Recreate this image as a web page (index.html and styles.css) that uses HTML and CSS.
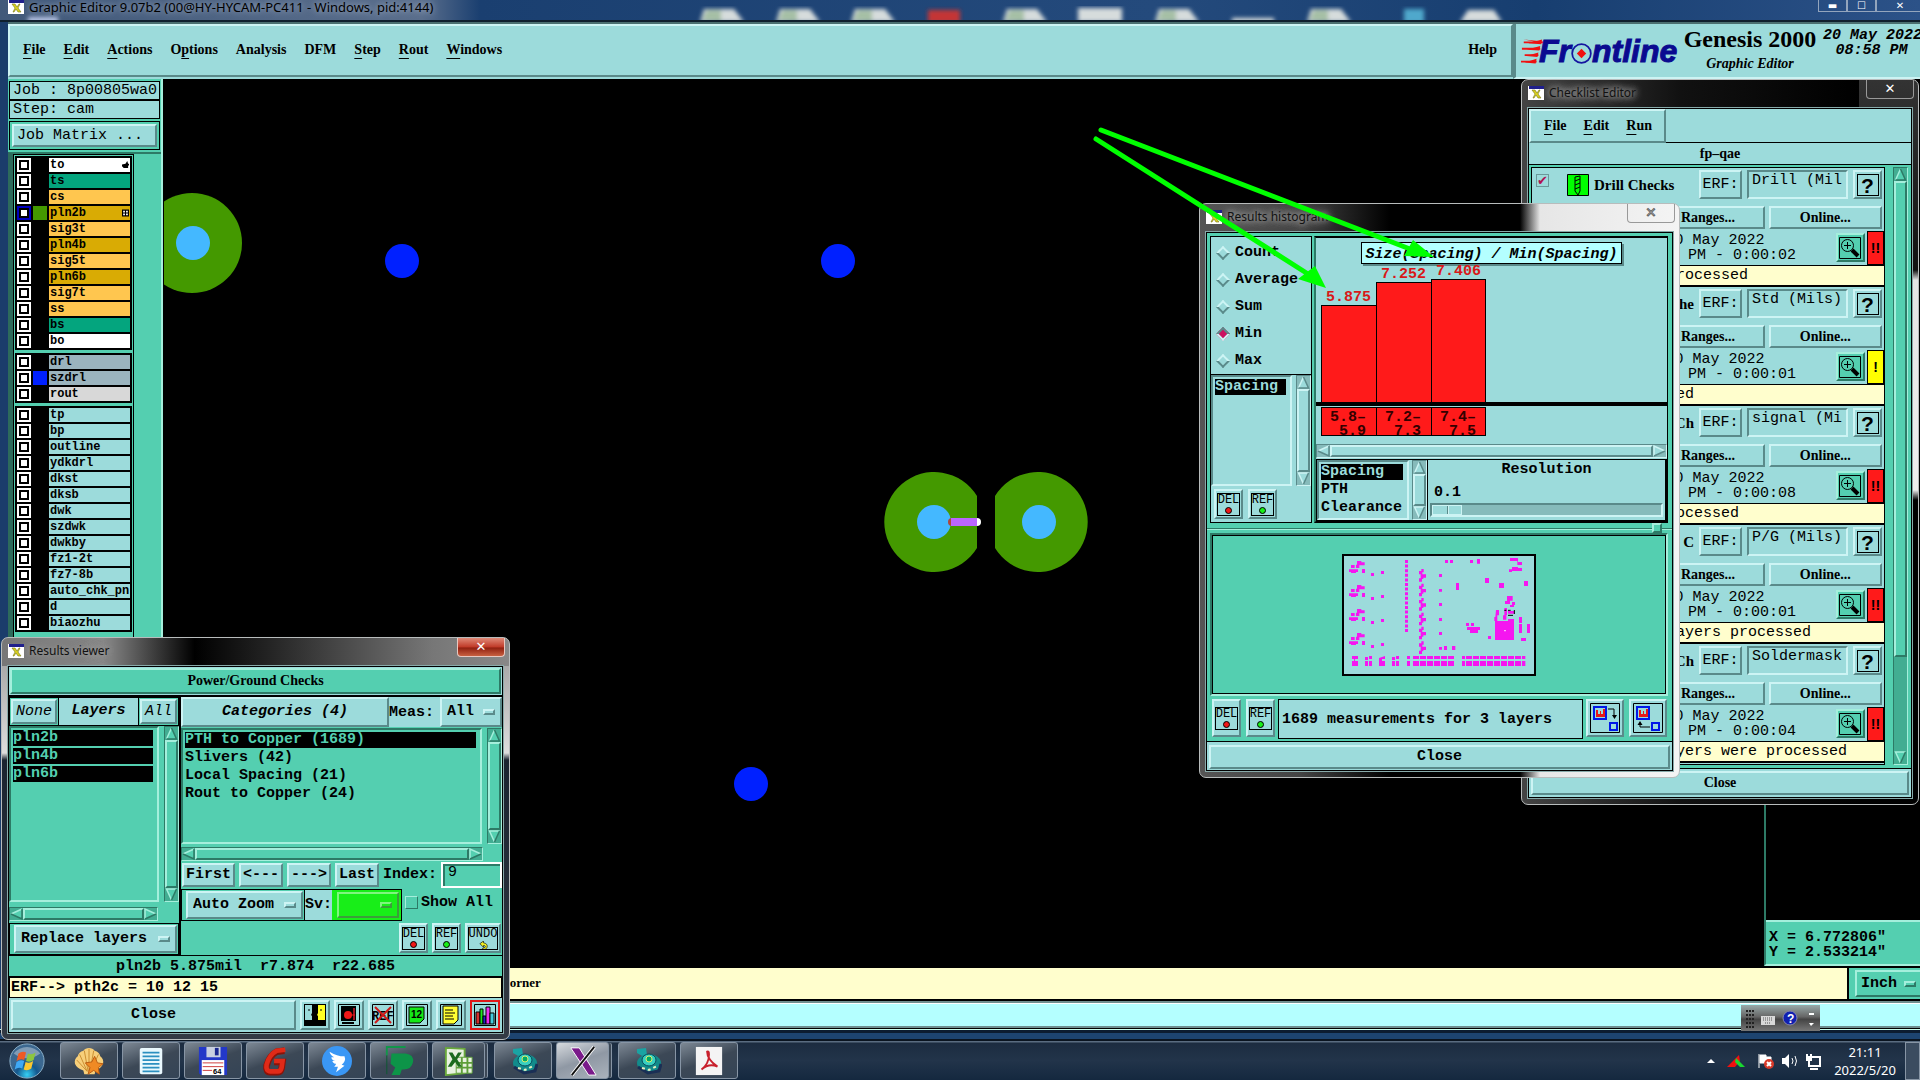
FILE: index.html
```html
<!DOCTYPE html>
<html lang="en">
<head>
<meta charset="utf-8">
<title>Graphic Editor 9.07b2</title>
<link rel="stylesheet" href="styles.css">
</head>
<body>
<svg class="defs" aria-hidden="true">
  <symbol id="a-up" viewBox="0 0 12 13"><path d="M6 1L11 12H1Z" class="a-f"/><path d="M6 1L1 12" class="a-h"/><path d="M6 1L11 12H1" class="a-l"/></symbol>
  <symbol id="a-dn" viewBox="0 0 12 13"><path d="M1 1H11L6 12Z" class="a-f"/><path d="M6 12L1 1H11" class="a-h"/><path d="M11 1L6 12" class="a-l"/></symbol>
  <symbol id="a-lf" viewBox="0 0 13 12"><path d="M1 6L12 1V11Z" class="a-f"/><path d="M1 6L12 1" class="a-h"/><path d="M12 1V11L1 6" class="a-l"/></symbol>
  <symbol id="a-rt" viewBox="0 0 13 12"><path d="M12 6L1 1V11Z" class="a-f"/><path d="M1 11V1L12 6" class="a-h"/><path d="M12 6L1 11" class="a-l"/></symbol>
  <symbol id="xico" viewBox="0 0 16 14"><path d="M0 0H16V14H0Z" fill="#fff"/><path d="M1 0H16V3H1Z" fill="#20208c"/><path d="M4 4l3 0 2 3 2-3h1l-2 4 3 4h-3l-2-3-2 3H5l2-4z" fill="#d8d020" stroke="#77751a" stroke-width=".6"/></symbol>
  <symbol id="mag" viewBox="0 0 22 22"><path d="M.5 .5H21.500V21.500H.5Z" fill="none" stroke="#000"/><circle cx="8.500" cy="8.500" r="6" fill="none" stroke="#000"/><path d="M5 8.500H12M8.500 5V12" stroke="#000"/><path d="M13 13L19 19" stroke="#000" stroke-width="4"/></symbol>
  <symbol id="bino" viewBox="0 0 30 30"><path d="M5 3l9-1 1 7 4 2 2 4-4 1-5-5-7-4z" fill="#1aa3a3"/><ellipse cx="17" cy="17" rx="12" ry="9" fill="#128b8b"/><ellipse cx="17" cy="14" rx="7" ry="6" fill="#37cfc0" stroke="#0b4a5c"/><circle cx="17" cy="13" r="3" fill="#0a6" stroke="#dfe96a"/><path d="M6 21l10 6 11-2 2-7" stroke="#1a2f55" stroke-width="3" fill="none"/><path d="M10 22l7 2 8-4" stroke="#e8f0c0" stroke-width="2" stroke-dasharray="3 3" fill="none"/></symbol>
</svg>

<main class="app">
  <header class="titlebar">
    <svg class="blur" aria-hidden="true"><g filter="url(#soft)"><filter id="soft"><feGaussianBlur stdDeviation="2"/></filter>
      <path d="M700 22l4-13h30l10 13z M776 22l4-13h30l10 13z M851 22l4-13h30l10 13z M1003 22l4-13h30l10 13z M1155 22l4-13h30l10 13z M1307 22l4-13h30l10 13z M1078 8h44v14h-44z M1460 22l8-12h26l8 12z M1232 18h42v5h-42z" fill="#d6dcdc"/>
      <path d="M702 20l5-10h14v12z M778 20l5-10h14v12z M853 20l5-10h14v12z M1005 20l5-10h14v12z M1157 20l5-10h14v12z M1309 20l5-10h14v12z" fill="#a5bfa5"/>
      <path d="M928 10h32v13h-32z" fill="#c43535"/><path d="M1404 9h20v14h-20z" fill="#50a8cc"/><path d="M28 17h30v6h-30z" fill="#b9c6e6"/>
    </g></svg>
    <svg class="x16"><use href="#xico"/></svg><span>Graphic Editor 9.07b2 (00@HY-HYCAM-PC411 - Windows, pid:4144)</span>
    <div class="winbtns"><button aria-label="Minimize">▬</button><button aria-label="Maximize">☐</button><button aria-label="Close">✕</button></div>
  </header>

  <div class="topbar">
    <nav class="menu up serif">
      <button><u>F</u>ile</button><button><u>E</u>dit</button><button><u>A</u>ctions</button><button>O<u>p</u>tions</button><button>Analysis</button><button>DFM</button><button><u>S</u>tep</button><button><u>R</u>out</button><button><u>W</u>indows</button>
      <button class="help">Help</button>
    </nav>
    <div class="brand">
      <div class="logo"><svg viewBox="0 0 24 27" aria-hidden="true"><path d="M3 3h21v2H3zM3 1l21 2v2zM1 10h20v2H1zM4 17h15v2H4zM0 24h17v2H0z" fill="#f01010"/><path d="M8 5l15-4-1 5zM6 12l15-4-1 5zM6 19l13-4-1 5zM4 26l13-4-1 5z" fill="#f01010"/></svg><span>Fr</span><svg class="o" viewBox="0 0 18 18" aria-hidden="true"><circle cx="9" cy="9" r="8" fill="none" stroke="#1515a0" stroke-width="1.500"/><path d="M9 5l4 4-4 4-4-4z" fill="#f01010"/></svg><span>ntline</span></div>
      <div class="prod"><b>Genesis 2000</b><i>Graphic Editor</i></div>
      <div class="clock">20 May 2022<br>08:58 PM</div>
    </div>
  </div>

  <section class="work">
    <aside class="side">
      <div class="job">Job : 8p00805wa0</div>
      <div class="job">Step: cam</div>
      <div class="jm"><button class="up">Job Matrix ...</button></div>
      <div class="lwrap"><div class="layers">
        <div class="grp">
          <label class="w"><input type="checkbox"><i></i><span>to<svg viewBox="0 0 8 9"><path d="M0 4l4-1 2-3 1 3h1v2H7v3H2L0 6z"/></svg></span></label>
          <label class="g"><input type="checkbox"><i></i><span>ts</span></label>
          <label class="o"><input type="checkbox"><i></i><span>cs</span></label>
          <label class="d sel"><input type="checkbox"><i class="c-green"></i><span>pln2b<svg viewBox="0 0 6 6"><path d="M.5 .5h5v5h-5zM3 0v6M0 3h6" fill="#fff" stroke="#000"/></svg></span></label>
          <label class="o"><input type="checkbox"><i></i><span>sig3t</span></label>
          <label class="d"><input type="checkbox"><i></i><span>pln4b</span></label>
          <label class="o"><input type="checkbox"><i></i><span>sig5t</span></label>
          <label class="d"><input type="checkbox"><i></i><span>pln6b</span></label>
          <label class="o"><input type="checkbox"><i></i><span>sig7t</span></label>
          <label class="o"><input type="checkbox"><i></i><span>ss</span></label>
          <label class="g"><input type="checkbox"><i></i><span>bs</span></label>
          <label class="w"><input type="checkbox"><i></i><span>bo</span></label>
        </div>
        <div class="grp">
          <label class="s"><input type="checkbox"><i></i><span>drl</span></label>
          <label class="s"><input type="checkbox"><i class="c-blue"></i><span>szdrl</span></label>
          <label class="l"><input type="checkbox"><i></i><span>rout</span></label>
        </div>
        <div class="grp">
          <label><input type="checkbox"><i></i><span>tp</span></label>
          <label><input type="checkbox"><i></i><span>bp</span></label>
          <label><input type="checkbox"><i></i><span>outline</span></label>
          <label><input type="checkbox"><i></i><span>ydkdrl</span></label>
          <label><input type="checkbox"><i></i><span>dkst</span></label>
          <label><input type="checkbox"><i></i><span>dksb</span></label>
          <label><input type="checkbox"><i></i><span>dwk</span></label>
          <label><input type="checkbox"><i></i><span>szdwk</span></label>
          <label><input type="checkbox"><i></i><span>dwkby</span></label>
          <label><input type="checkbox"><i></i><span>fz1-2t</span></label>
          <label><input type="checkbox"><i></i><span>fz7-8b</span></label>
          <label><input type="checkbox"><i></i><span>auto_chk_pnl</span></label>
          <label><input type="checkbox"><i></i><span>d</span></label>
          <label><input type="checkbox"><i></i><span>biaozhu</span></label>
        </div>
      </div></div>
    </aside>
    <div class="canvas">
      <svg class="pcb" viewBox="0 1 1756 889" preserveAspectRatio="xMinYMin slice" aria-label="Board view">
        <g fill="#449900"><circle cx="28" cy="165" r="50"/><path d="M813 418A50 50 0 1 0 813 470Z"/><path d="M831 418A50 50 0 1 1 831 470Z"/></g>
        <g fill="#44b8ff"><circle cx="29" cy="165" r="17"/><circle cx="770" cy="444" r="17"/><circle cx="875" cy="444" r="17"/></g>
        <g fill="#0020ff"><circle cx="238" cy="183" r="17"/><circle cx="674" cy="183" r="17"/><circle cx="587" cy="706" r="17"/></g>
        <circle cx="788" cy="444" r="4" fill="#b0463c"/><circle cx="813" cy="444" r="4" fill="#fff"/><path d="M787 440h26v8h-26z" fill="#bb66ff"/>
      </svg>
      <div class="coord green">X = 6.772806"<br>Y = 2.533214"</div>
    </div>
  </section>

  <div class="status"><span class="msg serif">corner</span><label class="unit green"><span class="opt up"><select aria-label="Units"><option>Inch</option></select><i></i></span></label></div>
  <div class="band"><div></div></div>
  <div class="frame"></div>

  <footer class="taskbar">
    <button class="orb" aria-label="Start"><svg viewBox="0 0 40 40"><defs><radialGradient id="ob" cx=".5" cy=".9"><stop offset="0" stop-color="#35d0f5"/><stop offset=".6" stop-color="#14588e"/><stop offset="1" stop-color="#3c6890"/></radialGradient></defs><circle cx="20" cy="20" r="18" fill="url(#ob)" stroke="#8fb4cc"/><path d="M6 12a18 18 0 0 1 28 0q-14 10-28 0z" fill="#fff" opacity=".35"/><path d="M11 12q4-3 8-1l-2 8q-4-2-8 1z" fill="#ee5a24"/><path d="M21 12q4 2 8-1l-2 8q-4 3-8 1z" fill="#8cc63f"/><path d="M9 21q4-3 8-1l-2 8q-4-2-8 1z" fill="#3fa9f5"/><path d="M18.500 21q4 2 8-1l-2 8q-4 3-8 1z" fill="#fdc82f"/></svg></button>
    <button aria-label="Shell"><svg viewBox="0 0 32 32"><path d="M16 2q4 0 6 3 5 1 6 6 4 3 3 8-2 5-8 7l-1 4H11l-1-4q-7-2-9-7-1-5 3-8 1-5 6-6 2-3 6-3z" fill="#f7cf7a"/><path d="M16 3v24M11 5l4 22M6 9l8 18M3 15l11 12M21 5l-4 22M26 9l-8 18" stroke="#c98c2e" fill="none"/><path d="M22 11l3 7 6 1-5 4 1 7-6-4-6 4 2-7-5-5 7-1z" fill="#f08a24" stroke="#b85a10"/></svg></button>
    <button aria-label="Notes"><svg viewBox="0 0 32 32"><rect x="4" y="2" width="24" height="28" rx="2" fill="#e9f8fd"/><path d="M7 7h18M7 11h18M7 15h18M7 19h18M7 23h18M7 27h18" stroke="#2b8fc0" stroke-width="2"/></svg></button>
    <button aria-label="Save"><svg viewBox="0 0 32 32"><path d="M1 1h30v30H3l-2-2z" fill="#2338c8"/><path d="M9 1h15v11H9z" fill="#c8d0e0"/><path d="M18 2h4v8h-4z" fill="#1a2890"/><path d="M4 15h24v16H4z" fill="#fff"/><path d="M5 18h22M5 22h22M5 26h10" stroke="#c33"/><text x="16" y="30" font-size="8" font-family="Liberation Sans" font-weight="bold">64</text></svg></button>
    <button aria-label="Genesis"><svg viewBox="0 0 32 32"><path d="M26 5l-8 1q-8 4-11 15-1 7 4 7h8q3 0 4-4l1-7h-9" fill="none" stroke="#8c1208" stroke-width="7"/><path d="M27 4l-9 1q-8 4-11 15-1 7 4 7h8q3 0 4-4l1-7h-9" fill="none" stroke="#e02a18" stroke-width="5"/></svg></button>
    <button aria-label="Messenger"><svg viewBox="0 0 32 32"><circle cx="16" cy="16" r="16" fill="#3a97f5"/><path d="M8 6q8 5 16 5 2 5-3 9l3 1-9 7 2-6h-4q2-2 2-3-3 0-4-3h3q-4-1-4-4h3q-4-2-5-6z" fill="#fff"/></svg></button>
    <button aria-label="PADS"><svg viewBox="0 0 32 32"><path d="M3 10V1h20" fill="none" stroke="#12964a" stroke-width="2"/><path d="M8 8h15q9 1 8 9-2 9-12 8l-2 6H8l4-8-5-4z" fill="#0d9448"/><path d="M3 10v20" stroke="#0a5a30"/></svg></button>
    <button class="stack" aria-label="Excel"><svg viewBox="0 0 32 32"><path d="M2 2l20 1v26L2 31z" fill="#e8f2e0" stroke="#69a83c" stroke-width="2"/><path d="M13 12h17v17H13z" fill="#e8f2e0" stroke="#5d9e38"/><path d="M13 18h17M13 23h17M19 12v17M25 12v17" stroke="#5d9e38" stroke-width="2"/><path d="M5 7l4 0 3 5 3-5h4l-5 7 5 8h-4l-3-5-4 5H4l5-8z" fill="#1c6b1f"/></svg></button>
    <button aria-label="Viewer"><svg viewBox="0 0 30 30"><use href="#bino"/></svg></button>
    <button class="stack on" aria-label="X server"><svg viewBox="0 0 32 32"><path d="M3 2h9l18 29h-8z" fill="#7a1a8a" stroke="#fff"/><path d="M28 1L4 31" stroke="#fff" stroke-width="4"/><path d="M28 1L4 31" stroke="#111" stroke-width="2"/></svg></button>
    <button aria-label="Viewer 2"><svg viewBox="0 0 30 30"><use href="#bino"/></svg></button>
    <button aria-label="Reader"><svg viewBox="0 0 32 32"><path d="M2 1h28v30H2z" fill="#f4f4f4"/><path d="M8 25q8-6 8-16 0-4-2-3 0 8 11 16-9-4-17 3z" fill="none" stroke="#c8202c" stroke-width="2"/></svg></button>
    <div class="tray">
      <svg width="120" height="24" viewBox="0 0 120 24" aria-label="Tray icons"><path d="M5 14l4-4 4 4z" fill="#fff"/><path d="M25 18L37 6l1 6-5 6z" fill="#f01010"/><path d="M34 9l9 9h-5l-5-5z" fill="#18d830"/><path d="M57 5v14M58 6h6v2h5v7h-5v-1h-6z" fill="#fff" stroke="#fff"/><circle cx="67" cy="15" r="5" fill="#d83a2a"/><path d="M65 13l4 4M69 13l-4 4" stroke="#fff" stroke-width="2"/><path d="M80 9h3l4-4v14l-4-4h-3z" fill="#fff"/><path d="M90 9q2 3 0 6M93 7q3 5 0 10" stroke="#fff" fill="none"/><path d="M107 8h11v9h-11zM108 20h8M105 5v6h4V5" fill="none" stroke="#fff" stroke-width="2"/></svg>
      <div class="time">21:11<br>2022/5/20</div>
      <button class="peek" aria-label="Show desktop"></button>
    </div>
  </footer>
</main>

<div class="langbar"><svg viewBox="0 0 79 26" aria-hidden="true"><path d="M5 6h8M5 10h8M5 14h8M5 18h8M5 22h8" stroke="#222" stroke-width="2" stroke-dasharray="2 1"/><rect x="20" y="11" width="14" height="9" fill="#d8d8d8"/><path d="M22 13h10M22 15h10M24 18h6" stroke="#555" stroke-dasharray="1 1"/><circle cx="49" cy="13" r="7" fill="#1020b0" stroke="#88a"/><text x="46" y="18" font-size="12" font-weight="bold" font-family="Liberation Sans" fill="#fff">?</text><path d="M68 9h5" stroke="#fff" stroke-width="2"/><path d="M68 18h5l-3 3z" fill="#fff"/></svg></div>

<section class="win checklist">
  <header><svg class="x16"><use href="#xico"/></svg><span>Checklist Editor</span><button class="close" aria-label="Close">✕</button></header>
  <div class="body">
    <div class="cl-top"><nav class="up serif"><button><u>F</u>ile</button><button><u>E</u>dit</button><button><u>R</u>un</button></nav></div>
    <div class="cl-name serif">fp–qae</div>
    <div class="cl-scroll green">
      <div class="cl-list">
        <article><div class="r1"><input type="checkbox" checked aria-label="Drill Checks"><svg class="drill" viewBox="0 0 22 22"><path d="M.5 .5h21v21H.5z" fill="#00ff00" stroke="#000"/><path d="M8 3l5-1v15l-2 4-3-4zM8 7l5-2M8 11l5-2M8 15l5-2" fill="none" stroke="#000"/></svg><b>Drill Checks</b><button class="up">ERF:</button><input class="in" aria-label="ERF 1" value="Drill (Mil"><button class="up q"><span>?</span></button></div>
          <div class="r2"><button class="up">Params...</button><button class="up">Ranges...</button><button class="up">Online...</button></div>
          <div class="r3"><p>20 May 2022<br>08:51 PM - 0:00:02</p><button class="up green" aria-label="View"><svg><use href="#mag"/></svg></button><em>!!</em></div><div class="r4">1 drill layers processed</div></article>
        <article><div class="r1"><input type="checkbox" aria-label="Board Drill Checks"><svg class="drill" viewBox="0 0 22 22"><path d="M.5 .5h21v21H.5z" fill="#00ff00" stroke="#000"/></svg><b class="end">Drill Che</b><button class="up">ERF:</button><input class="in" aria-label="ERF 2" value="Std (Mils)"><button class="up q"><span>?</span></button></div>
          <div class="r2"><button class="up">Params...</button><button class="up">Ranges...</button><button class="up">Online...</button></div>
          <div class="r3"><p>20 May 2022<br>08:51 PM - 0:00:01</p><button class="up green" aria-label="View"><svg><use href="#mag"/></svg></button><em class="y">!</em></div><div class="r4">3 drills processed</div></article>
        <article><div class="r1"><input type="checkbox" aria-label="Signal Layer Checks"><svg class="drill" viewBox="0 0 22 22"><path d="M.5 .5h21v21H.5z" fill="#00ff00" stroke="#000"/></svg><b class="end">Signal Ch</b><button class="up">ERF:</button><input class="in" aria-label="ERF 3" value="signal (Mi"><button class="up q"><span>?</span></button></div>
          <div class="r2"><button class="up">Params...</button><button class="up">Ranges...</button><button class="up">Online...</button></div>
          <div class="r3"><p>20 May 2022<br>08:51 PM - 0:00:08</p><button class="up green" aria-label="View"><svg><use href="#mag"/></svg></button><em>!!</em></div><div class="r4">4 layers were processed</div></article>
        <article><div class="r1"><input type="checkbox" aria-label="Power/Ground Checks"><svg class="drill" viewBox="0 0 22 22"><path d="M.5 .5h21v21H.5z" fill="#00ff00" stroke="#000"/></svg><b class="end">Ground C</b><button class="up">ERF:</button><input class="in" aria-label="ERF 4" value="P/G (Mils)"><button class="up q"><span>?</span></button></div>
          <div class="r2"><button class="up">Params...</button><button class="up">Ranges...</button><button class="up">Online...</button></div>
          <div class="r3"><p>20 May 2022<br>08:51 PM - 0:00:01</p><button class="up green" aria-label="View"><svg><use href="#mag"/></svg></button><em>!!</em></div><div class="r4">3 power/ground layers processed</div></article>
        <article><div class="r1"><input type="checkbox" aria-label="Solder Mask Checks"><svg class="drill" viewBox="0 0 22 22"><path d="M.5 .5h21v21H.5z" fill="#00ff00" stroke="#000"/></svg><b class="end">Mask Ch</b><button class="up">ERF:</button><input class="in" aria-label="ERF 5" value="Soldermask"><button class="up q"><span>?</span></button></div>
          <div class="r2"><button class="up">Params...</button><button class="up">Ranges...</button><button class="up">Online...</button></div>
          <div class="r3"><p>20 May 2022<br>08:51 PM - 0:00:04</p><button class="up green" aria-label="View"><svg><use href="#mag"/></svg></button><em>!!</em></div><div class="r4">2 solder mask layers were processed</div></article>
      </div>
      <div class="vs long"><svg><use href="#a-up"/></svg><i class="up"></i><s></s><svg><use href="#a-dn"/></svg></div>
    </div>
    <div class="foot"><button class="up serif">Close</button></div>
  </div>
</section>

<section class="win histo">
  <header><svg class="x16"><use href="#xico"/></svg><span>Results histogram</span><button class="close" aria-label="Close">✕</button></header>
  <div class="body green">
    <div class="hi-top">
      <div class="hi-left cyan">
        <fieldset>
          <label><input type="radio" name="m">Count</label><label><input type="radio" name="m">Average</label><label><input type="radio" name="m">Sum</label><label><input type="radio" name="m" checked>Min</label><label><input type="radio" name="m">Max</label>
        </fieldset>
        <div class="lrow"><ul class="in list"><li class="cur">Spacing</li></ul><div class="vs"><svg><use href="#a-up"/></svg><i class="up"></i><svg><use href="#a-dn"/></svg></div></div>
        <div class="brow"><button class="up tool"><span>DEL<i class="red"></i></span></button><button class="up tool"><span>REF<i class="grn"></i></span></button></div>
      </div>
      <div class="hi-right cyan">
        <h3>Size(Spacing) / Min(Spacing)</h3>
        <div class="plot">
          <div><span>5.875</span><i style="height:97px"></i></div><div><span>7.252</span><i style="height:120px"></i></div><div><span>7.406</span><i style="height:123px"></i></div>
        </div>
        <div class="xlab"><span>5.8–<br>&nbsp;5.9</span><span>7.2–<br>&nbsp;7.3</span><span>7.4–<br>&nbsp;7.5</span></div>
        <div class="hs"><svg><use href="#a-lf"/></svg><i class="up"></i><svg><use href="#a-rt"/></svg></div>
        <div class="res">
          <ul class="in list"><li class="cur">Spacing</li><li>PTH</li><li>Clearance</li></ul>
          <div class="vs"><svg><use href="#a-up"/></svg><i class="up"></i><svg><use href="#a-dn"/></svg></div>
          <div class="reso"><label for="rs">Resolution</label><output>0.1</output><input id="rs" type="range" min="0" max="100" value="0"></div>
        </div>
      </div>
    </div>
    <div class="sash"><i class="up"></i></div>
    <div class="map in">
      <svg viewBox="486 132 582 366" fill="#f516f0">
        <path d="M489 135h576v360H489z" fill="#9cdbdb" stroke="#000" stroke-width="6"/>
        <g id="clu"><path d="M531 153h13v4h10v9h-16v8h-10v-10h3zM513 165h11v9h-11zM507 178h27v8h-6v3h-15v-3h-6zM546 177h9v12h-9zM573 189h9v9h-9zM603 183h9v9h-9z"/></g>
        <use href="#clu" y="72"/><use href="#clu" y="144"/><use href="#clu" y="216"/>
        <path d="M679.500 150V366" stroke="#f516f0" stroke-width="9" stroke-dasharray="9 4.800"/>
        <g id="zz"><path d="M724 177h7v10h-4v6h11v10h-8v4h-4v8h-9v-10h5v-12h-5v-10h7z"/></g>
        <use href="#zz" y="44"/><use href="#zz" y="87"/><use href="#zz" y="131"/><use href="#zz" y="173"/><use href="#zz" y="217"/>
        <path d="M777 192h9v9h-9zM777 237h9v8h-9zM777 279h9v9h-9zM777 324h9v9h-9zM777 366h9v9h-9zM777 411h9v8h-9zM792 408h9v12h-9zM816 408h10v12h-10zM795 150h9v9h-9zM810 150h9v9h-9zM870 150h9v9h-9zM891 147h9v14h-9zM828 219h9v21h-9zM915 204h12v15h-12zM957 219h15v15h-15zM1032 213h12v15h-12zM990 144h24v12h12v9h-14v-12h-22zM987 178h9v-7h18v3h12v9h-30v3h-9zM858 339h9v9h-9zM873 339h9v9h-9zM861 351h39v9h-6v9h-24v-9h-9zM924 378h9v9h-9zM945 333h39v-6h18v63h-57zM948 300h9v16h-5v17h-9v-12h3zM973 294h8v21h-2v14h-10v-13h4zM981 258h17v14h-8v10h-15v-9h6zM990 285h6v-9h9v9h-3v6h-12zM984 303h18v8h-18zM1017 321h9v18h-9zM1017 342h9v27h-9zM1041 342h9v27h-9zM1023 384h15v9h-15z"/>
        <path d="M516 438h18v9h-9v6h9v15h-18v-15h6v-6h-6zM555 441h9v9h-9zM567 438h9v9h-9zM555 453h9v15h-9zM567 453h9v15h-9zM597 444l18-6v9h-9v6h9v15h-18zM636 441h9v9h-9zM648 438h9v9h-9zM636 453h9v15h-9zM648 453h9v15h-9zM681 438h9v9h-9zM681 453h9v15h-9z"/>
        <path d="M699 442.500H823M858 442.500H1036" stroke="#f516f0" stroke-width="9" stroke-dasharray="18 3"/><path d="M699 460.500H823M858 460.500H1036" stroke="#f516f0" stroke-width="15" stroke-dasharray="18 3"/><path d="M846 438h9v9h-9zM846 453h9v15h-9z"/>
        <path d="M973 301h6M984 301h8M984 316h15M1003 300v12" stroke="#000" stroke-width="3"/><path d="M973 360h4v4h-4z" fill="#fff"/>
      </svg>
    </div>
    <div class="hi-foot cyan"><button class="up tool"><span>DEL<i class="red"></i></span></button><button class="up tool"><span>REF<i class="grn"></i></span></button><output>1689 measurements for 3 layers</output>
      <button class="up sq" aria-label="Copy out"><svg viewBox="0 0 30 30"><path d="M.5 .5h29v29H.5z" fill="none" stroke="#000"/><path d="M4 4h12v12H4zM20 20h7v7h-7z" fill="none" stroke="#0018e8" stroke-width="2"/><path d="M6 14v-7h2v4h2V8h1v3h2V6h2v8z" fill="#e81818"/><path d="M18 6h6v8" fill="none" stroke="#000"/><path d="M22 12h5l-2.500 4z"/></svg></button>
      <button class="up sq" aria-label="Copy in"><svg viewBox="0 0 30 30"><path d="M.5 .5h29v29H.5z" fill="none" stroke="#000"/><path d="M4 4h12v12H4zM19 20h7v7h-7z" fill="none" stroke="#0018e8" stroke-width="2"/><path d="M6 14v-7h2v4h2V8h1v3h2V6h2v8z" fill="#e81818"/><path d="M7 20v4h10" fill="none" stroke="#000"/><path d="M4.500 22h5L7 18z"/></svg></button></div>
    <div class="foot cyan"><button class="up mono">Close</button></div>
  </div>
</section>

<section class="win viewer">
  <header><svg class="x16"><use href="#xico"/></svg><span>Results viewer</span><button class="close" aria-label="Close">✕</button></header>
  <div class="body">
    <div class="rv-head"><h2 class="up green serif">Power/Ground Checks</h2></div>
    <div class="rv-main green">
      <div class="rv-l">
        <div class="tabs cyan"><button class="up">None</button><b>Layers</b><button class="up">All</button></div>
        <div class="lrow"><ul class="in list"><li class="cur">pln2b</li><li class="cur">pln4b</li><li class="cur">pln6b</li></ul><div class="vs"><svg><use href="#a-up"/></svg><i class="up"></i><svg><use href="#a-dn"/></svg></div></div>
        <div class="hs"><svg><use href="#a-lf"/></svg><i class="up"></i><svg><use href="#a-rt"/></svg></div>
        <div class="repl cyan"><label class="opt up"><select aria-label="Layer mode"><option>Replace layers</option></select><i></i></label></div>
      </div>
      <div class="rv-r">
        <div class="cats cyan"><button class="up">Categories (4)</button><label for="meas">Meas:</label><span class="opt up"><select id="meas"><option>All</option></select><i></i></span></div>
        <div class="lrow"><ul class="in list"><li class="cur">PTH to Copper (1689)</li><li>Slivers (42)</li><li>Local Spacing (21)</li><li>Rout to Copper (24)</li></ul><div class="vs"><svg><use href="#a-up"/></svg><i class="up"></i><svg><use href="#a-dn"/></svg></div></div>
        <div class="hs"><svg><use href="#a-lf"/></svg><i class="up"></i><svg><use href="#a-rt"/></svg></div>
        <div class="navr"><button class="up cyan">First</button><button class="up cyan">&lt;---</button><button class="up cyan">---&gt;</button><button class="up cyan">Last</button><label for="ix">Index:</label><input id="ix" value="9"></div>
        <div class="zoomr"><div class="az cyan"><label class="opt up"><select aria-label="Zoom mode"><option>Auto Zoom</option></select><i></i></label></div><div class="sv cyan"><label for="sv">Sv:</label><span><span class="opt up"><select id="sv"><option></option></select><i></i></span></span></div><label class="show"><input type="checkbox">Show All</label></div>
        <div class="toolr cyan"><button class="up tool"><span>DEL<i class="red"></i></span></button><button class="up tool"><span>REF<i class="grn"></i></span></button><button class="up tool wide"><span>UNDO<svg viewBox="0 0 10 10"><path d="M1 3l4-3v2q5 1 4 5-1 3-5 3V8q3 0 3-2 0-1-2-1v2z" fill="#ee2" stroke="#000" stroke-width=".7"/></svg></span></button></div>
      </div>
    </div>
    <div class="rv-stat">pln2b 5.875mil&nbsp; r7.874&nbsp; r22.685</div>
    <div class="rv-erf">ERF--&gt; pth2c = 10 12 15</div>
    <div class="rv-foot cyan"><button class="up mono">Close</button>
      <button class="up ic" aria-label="Compare"><svg viewBox="0 0 22 22"><path d="M0 0h22v22H0z"/><path d="M1 1h7v8l-1 2 1 1v4H1z" fill="#9cdbdb"/><path d="M21 1h-7v8l-1 2 1 1v4h7z" fill="#ff2"/><path d="M5 5v2M17 5v2" stroke="#000"/></svg></button>
      <button class="up ic" aria-label="Snapshot"><svg viewBox="0 0 22 22"><path d="M.5 .5h21v21H.5z" fill="#9cdbdb" stroke="#000"/><path d="M3 2h15v15H3z"/><path d="M4 18h12v2H4z" fill="#000"/><circle cx="10" cy="11" r="4" fill="#f01818"/><path d="M15 4h2v12h-2z" fill="#a01020"/><path d="M12 11h5" stroke="#f01818"/></svg></button>
      <button class="up ic" aria-label="Clear references"><svg viewBox="0 0 22 22"><path d="M.5 .5h21v21H.5z" fill="#9cdbdb" stroke="#000"/><text x="0" y="16" font-size="12" font-family="Liberation Mono">REF</text><path d="M3 3l16 16M19 3L3 19" stroke="#d01818" stroke-width="2"/></svg></button>
      <button class="up ic" aria-label="Numbers"><svg viewBox="0 0 22 22"><path d="M.5 .5h21v21H.5z" fill="#9cdbdb" stroke="#000"/><path d="M3 3h15v12l-4 4H3z" fill="#16e818" stroke="#000"/><text x="5" y="14" font-size="10" font-weight="bold" font-family="Liberation Sans">12</text></svg></button>
      <button class="up ic" aria-label="Notes"><svg viewBox="0 0 22 22"><path d="M.5 .5h21v21H.5z" fill="#9cdbdb" stroke="#000"/><path d="M3 2h15v14l-4 4H3z" fill="#ff3" stroke="#000"/><path d="M5 6h8M5 9h10M5 12h8M5 15h9" stroke="#000"/></svg></button>
      <button class="up ic hot" aria-label="Histogram"><svg viewBox="0 0 22 22"><path d="M.5 .5h21v21H.5z" fill="#9cdbdb" stroke="#000"/><path d="M2 8h4v12H2z" fill="#d03030" stroke="#000"/><path d="M6 5h3v15H6z" fill="#1de81d" stroke="#000"/><path d="M9 12h3v8H9z" fill="#22c" stroke="#000"/><path d="M12 3h4v17h-4z" fill="#f02af0" stroke="#000"/><path d="M16 9h4v11h-4z" fill="#4cd" stroke="#000"/></svg></button>
    </div>
  </div>
</section>

<svg class="arrows" aria-hidden="true"><g fill="#00ff00" stroke="#00ff00"><path d="M1101 130L1410 249M1096 139L1308 274" stroke-width="5" stroke-linecap="round"/><path d="M1434 257L1404 256L1413 240Z M1326 288L1298 279L1315 266Z" stroke="none"/></g></svg>
</body>
</html>
```
FILE: styles.css
```css
* { box-sizing: border-box; }
body { margin: 0; background: #1b3d6b; color: #000; overflow: hidden; font: bold 15px/18px "Liberation Mono", monospace; }
button, input, select { font: inherit; color: inherit; margin: 0; padding: 0; border: 0; background: none; border-radius: 0; white-space: nowrap; }
ul, p, h2, h3, fieldset { margin: 0; padding: 0; border: 0; font: inherit; }
ul { list-style: none; }
svg { display: block; flex: none; }
.defs { position: absolute; width: 0; height: 0; }
.serif { font: bold 14px/18px "Liberation Serif", serif; }

body, .cyan { --bg: #9cdbdb; --hi: #cdf4f4; --lo: #5a8a8a; --tr: #86bbbb; }
.green { --bg: #54cfb0; --hi: #a5efdc; --lo: #2d7a66; --tr: #42ad92; }
.up { background: var(--bg); border: 2px solid; border-color: var(--hi) var(--lo) var(--lo) var(--hi); }
.in { border: 2px solid; border-color: var(--lo) var(--hi) var(--hi) var(--lo); }
.a-f { fill: var(--bg); }
.a-h { fill: none; stroke: var(--hi); stroke-width: 1.5; }
.a-l { fill: none; stroke: var(--lo); stroke-width: 1.5; }
u { text-underline-offset: 4px; text-decoration-thickness: 1px; }

/* main window */
.app { display: flex; flex-direction: column; height: 100vh; }
.titlebar { position: relative; flex: none; display: flex; align-items: center; gap: 5px; height: 22px; padding: 0 0 7px 8px; border-bottom: 2px solid #10202e; background: linear-gradient(90deg, #41597a 0, #5a6e8c 22%, #1a3f70 25%, #244a7c 60%, #173e70 80%, #2c5288); font: 13px/14px "Noto Sans", sans-serif; }
.titlebar > span { position: relative; text-shadow: 0 0 6px #b8c4d6; }
.blur { position: absolute; left: 0; top: 0; width: 100%; height: 20px; }
.x16 { position: relative; width: 16px; height: 14px; }
.winbtns { position: relative; display: flex; margin-left: auto; margin-right: -4px; align-self: flex-start; }
.winbtns button { width: 29px; height: 12px; border: 1px solid #93a5bd; border-top: 0; color: #fff; font: bold 10px/8px "DejaVu Sans", sans-serif; }
.winbtns button:last-child { width: 48px; }
.topbar { flex: none; display: flex; height: 57px; margin-left: 8px; border-top: 2px solid #4b6f70; background: #9cdbdb; }
.menu { flex: 1; display: flex; align-items: center; gap: 18px; padding: 0 14px 2px 13px; border-bottom-width: 2px; margin-bottom: 2px; }
.menu .help { margin-left: auto; }
.brand { display: flex; width: 407px; padding-left: 5px; gap: 5px; overflow: hidden; border-left: 3px solid #5a8a8a; border-bottom: 2px solid #cdf4f4; }
.logo { display: flex; align-items: center; flex: none; width: 156px; color: #0a0a90; font: italic bold 32px/32px "Liberation Sans", sans-serif; -webkit-text-stroke: 1px #0a0a90; }
.logo svg { width: 22px; height: 26px; margin-right: -4px; }
.logo svg.o { width: 21px; height: 21px; margin: 5px 0 0; }
.prod { display: flex; flex: none; flex-direction: column; align-items: center; width: 136px; font: bold 24px/30px "Liberation Serif", serif; white-space: nowrap; }
.prod i { font-size: 14px; line-height: 20px; }
.clock { font-style: italic; line-height: 15px; padding-top: 4px; white-space: nowrap; text-align: center; flex: none; width: 97px; }
.work { flex: 1; display: flex; min-height: 0; margin-left: 8px; background: #000; }
.side { display: flex; flex-direction: column; flex: none; width: 155px; padding-top: 2px; background: #54cfb0; border-right: 2px solid #a5efdc; }
.job { height: 19px; margin: 0 1px; padding-left: 3px; border: 1px solid #000; background: #9cdbdb; font-weight: normal; line-height: 18px; white-space: nowrap; }
.jm { margin: 2px 1px 2px; padding: 2px; border: 1px solid #000; }
.jm button { display: block; width: 100%; height: 23px; text-align: left; font-weight: normal; padding-left: 3px; }
.lwrap { flex: 1; overflow: hidden; border-top: 2px solid #2d7a66; border-left: 5px solid #2d6b5c; }
.layers { width: 121px; padding: 1px 1px 0; border: 1px solid #000; border-bottom: 0; height: 100%; display: flex; flex-direction: column; gap: 3px; }
.grp { display: flex; flex-direction: column; gap: 2px; padding: 2px; background: #000; }
.grp label { display: flex; gap: 2px; height: 14px; }
.grp input { appearance: none; flex: none; width: 14px; height: 14px; background: #fff; border: 2px solid #fff; outline: 2px solid #000; outline-offset: -4px; }
.grp .sel input { border-color: #0000c0; }
.grp i { flex: none; width: 14px; height: 14px; }
.grp .c-green { background: #449900; }
.grp .c-blue { background: #0020ff; }
.grp span { flex: 1; min-width: 0; display: flex; align-items: center; justify-content: space-between; overflow: hidden; padding: 0 1px; background: #9cdbdb; font-size: 12px; line-height: 13px; }
.grp span svg { width: 7px; height: 8px; }
.grp .w span { background: #fff; }
.grp .g span { background: #04a57e; }
.grp .o span { background: #ffc64f; }
.grp .d span { background: #d9ab04; }
.grp .s span { background: #9bb4be; }
.grp .l span { background: #d8d8d8; }
.canvas { position: relative; flex: 1; overflow: hidden; background: #000; border-left: 1px solid #000; }
.pcb { width: 100%; height: 100%; }
.coord { position: absolute; right: 0; bottom: 2px; width: 156px; height: 46px; padding: 8px 3px; background: #54cfb0; border: 2px solid #a5efdc; border-left-color: #2d7a66; border-right: 0; line-height: 15px; }
.coord::before { content: ""; position: absolute; left: -2px; bottom: 100%; width: 2px; height: 100vh; background: #2d7a66; }
.status { flex: none; display: flex; justify-content: space-between; height: 33px; margin-left: 8px; background: #fffecd; border-bottom: 2px solid #000; }
.msg { font-size: 13px; line-height: 30px; padding-left: 496px; }
.unit { display: flex; width: 73px; padding: 2px 0 2px 6px; background: #54cfb0; border-left: 2px solid #000; }
.unit .opt { flex: 1; border-right: 0; padding: 0 4px 0 4px; }
.band { flex: none; height: 28px; margin-left: 8px; padding-top: 2px; background: #6f8f8f; border-bottom: 1px solid #000; }
.band div { height: 23px; background: #b4ffff; border-top: 1px solid #fff; }
.frame { flex: none; height: 12px; background: linear-gradient(#0c1c30 0 3px, #1d4470 3px 9px, #0a1420 9px); border-top: 1px solid #cfe; }
.opt { display: flex; align-items: center; justify-content: space-between; padding: 0 5px; }
.opt select { appearance: none; outline: 0; flex: 1; min-width: 0; width: 20px; }
.opt i { width: 12px; height: 6px; border: 2px solid; border-color: var(--hi) var(--lo) var(--lo) var(--hi); }

/* taskbar */
.taskbar { flex: none; display: flex; align-items: center; gap: 4px; height: 39px; padding-left: 6px; background: linear-gradient(#5a6c80 0 1px, #1c2c40 2px, #22344a 50%, #14283f); }
.taskbar > button { display: grid; place-items: center; width: 58px; height: 37px; border: 1px solid #8795a5; border-radius: 3px; background: linear-gradient(160deg, #7d8894, #3c4856 50%, #344456); }
.taskbar > button svg { width: 32px; height: 30px; }
.taskbar > .orb { width: 42px; border: 0; background: none; margin-right: 8px; }
.taskbar > .orb svg { width: 40px; height: 38px; }
.taskbar > .stack { width: 53px; margin-right: 5px; box-shadow: 3px 0 0 -1px #3c4856, 4px 0 0 -1px #8795a5; }
.taskbar > .on { background: linear-gradient(160deg, #d6dade, #8f98a4 50%, #aab2bc); }
.tray { display: flex; align-items: center; margin-left: auto; color: #fff; font: 13px/18px "Noto Sans", sans-serif; text-align: center; }
.tray svg { margin-right: 3px; }
.time { width: 80px; }
.peek { width: 15px; height: 38px; border: 1px solid #8795a5; background: #3b4c60; }
.langbar { position: absolute; left: 1741px; top: 1005px; width: 79px; height: 26px; background: linear-gradient(#9aa 0, #666 45%, #444 55%, #777); }

/* floating windows */
.win { position: absolute; display: flex; flex-direction: column; border: 1px solid #b8bcbc; border-radius: 7px; padding: 0 6px 6px; }
.win > header { display: flex; gap: 5px; height: 28px; flex: none; font: 12px/24px "Noto Sans", sans-serif; color: #111; }
.win > header .x16 { margin-top: 6px; }
.win > header span { padding-top: 1px; text-shadow: 0 0 5px #999, 0 0 8px #999, 0 0 10px #999, 0 0 12px #888; }
.close { width: 48px; height: 19px; margin-left: auto; border: 1px solid #999; border-top: 0; border-radius: 0 0 4px 4px; color: #fff; font: bold 13px/16px "DejaVu Sans", sans-serif; }
.body { flex: 1; display: flex; flex-direction: column; min-height: 0; background: var(--bg); border: 1px solid #000; outline: 1px solid #8aa; }
.foot { flex: none; display: flex; padding: 2px; border-top: 1px solid #000; background: var(--bg); }
.foot button { flex: 1; height: 24px; }
.list { flex: 1; min-width: 0; padding: 2px; overflow: hidden; font-weight: bold; }
.list li { height: 16px; line-height: 16px; margin-bottom: 2px; margin-right: 2px; white-space: nowrap; }
.list .cur { background: #000; color: var(--bg); }
.vs, .hs { display: flex; background: var(--tr); border: 1px solid; border-color: var(--lo) var(--hi) var(--hi) var(--lo); }
.vs { flex-direction: column; width: 15px; flex: none; }
.vs i, .hs i { flex: 1; }
.vs svg { width: 13px; height: 13px; }
.hs { height: 14px; flex: none; }
.hs svg { width: 13px; height: 12px; }
.tool { width: 29px; height: 30px; padding: 2px 1px; }
.tool span { display: flex; flex-direction: column; align-items: center; width: 23px; height: 23px; border: 1px solid #000; font: 12px/13px "Liberation Mono", monospace; overflow: hidden; }
.tool span i { width: 7px; height: 7px; border: 1px solid #000; border-radius: 4px; }
.tool svg { width: 9px; height: 9px; }
.tool.wide { width: 36px; }
.tool.wide span { width: 30px; }
.red { background: #f01818; }
.grn { background: #18f018; }

/* checklist */
.checklist { left: 1521px; top: 79px; width: 398px; height: 726px; background: linear-gradient(90deg, #444, #111 40%, #000 85%, transparent 85%), linear-gradient(#333 0, #111 190px, #e4e4e4 200px, #eee 410px, #000 420px); }
.checklist .close { margin-right: -2px; }
.cl-top { height: 34px; border-bottom: 1px solid #000; }
.cl-top nav { display: flex; gap: 17px; width: 137px; height: 34px; padding: 0 13px; align-items: center; }
.cl-name { height: 22px; text-align: center; line-height: 21px; border-bottom: 1px solid #000; }
.cl-scroll { flex: 1; display: flex; min-height: 0; padding: 2px 3px 3px 2px; gap: 8px; background: #54cfb0; }
.cl-list { flex: 1; min-width: 0; overflow: hidden; border: 1px solid #000; --bg: #9cdbdb; --hi: #cdf4f4; --lo: #5a8a8a; background: #9cdbdb; font-weight: normal; }
.cl-list article { height: 119px; border-bottom: 2px solid #000; }
.r1 { display: flex; align-items: center; gap: 5px; height: 33px; padding: 0 2px 0 4px; }
.r1 input[type=checkbox] { appearance: none; flex: none; width: 13px; height: 13px; margin: -8px 13px 0 0; border: 1px solid #6a9a9a; color: #b01050; font: bold 13px/12px "DejaVu Sans", sans-serif; }
.r1 input:checked::before { content: "✔"; }
.drill { width: 22px; height: 22px; }
.r1 b { flex: none; width: 100px; white-space: nowrap; font: bold 15px/18px "Liberation Serif", serif; }
.r1 .end { text-align: right; }
.r1 button { flex: none; width: 43px; height: 29px; }
.r1 .in { flex: 1; min-width: 0; height: 29px; padding: 0 0 8px 3px; }
.r1 .q { width: 29px; display: grid; place-items: center; }
.q span { width: 22px; height: 22px; border: 1px solid #000; font: bold 21px/21px "Liberation Sans", sans-serif; }
.r2 { display: flex; gap: 4px; padding: 5px 2px 0; }
.r2 button { flex: 1; height: 23px; font: bold 14px/18px "Liberation Serif", serif; }
.r3 { display: flex; align-items: center; height: 36px; padding-top: 1px; text-align: center; line-height: 15px; }
.r3 p { flex: 1; white-space: nowrap; padding-left: 62px; }
.r3 .up { width: 29px; height: 29px; padding: 1px; margin-right: 2px; }
.r3 svg { width: 22px; height: 22px; }
.r3 em { width: 17px; height: 34px; background: #ff1a1a; border: 1px solid #000; font: bold 14px/32px "Liberation Sans", sans-serif; }
.r3 em.y { background: #ff0; }
.r4 { height: 20px; background: #fffecd; border-top: 1px solid #000; line-height: 19px; white-space: nowrap; }
.vs.long s { height: 94px; }

/* histogram */
.histo { left: 1199px; top: 203px; width: 481px; height: 575px; background: linear-gradient(90deg, #555 0, #444 100px, #000 190px, #000 320px, #e6e6e6 340px, #f4f4f4); }
.histo .close { color: #eee; -webkit-text-stroke: 1px #666; margin-right: -2px; }
.hi-top { display: flex; gap: 2px; height: 290px; padding: 3px 4px 0 3px; }
.hi-left { flex: none; width: 102px; background: var(--bg); border: 1px solid #000; display: flex; flex-direction: column; }
fieldset { height: 138px; padding-top: 2px; border-bottom: 1px solid #000; }
fieldset label { display: flex; align-items: center; gap: 7px; height: 27px; padding-left: 7px; }
fieldset input { appearance: none; width: 10px; height: 10px; transform: rotate(45deg); border: 2px solid; border-color: var(--hi) var(--lo) var(--lo) var(--hi); }
fieldset input:checked { background: #cc1060; border-color: var(--lo) var(--hi) var(--hi) var(--lo); }
.hi-left .lrow { display: flex; gap: 4px; height: 116px; }
.brow { display: flex; gap: 5px; padding: 3px; }
.hi-right { flex: 1; display: flex; flex-direction: column; min-width: 0; background: var(--bg); border: 2px solid #000; border-right-width: 1px; border-left-color: #2d7a66; }
.hi-right h3 { align-self: center; height: 22px; margin-top: 4px; padding: 0 3px; background: #b4ffff; border: 1px solid #000; box-shadow: 2px 2px #5a8a8a; font-style: italic; line-height: 24px; flex: none; }
.plot { height: 142px; flex: none; display: flex; align-items: flex-end; padding-left: 5px; border-bottom: 4px solid #000; }
.plot div { display: flex; flex-direction: column; width: 55px; color: #d81818; text-align: center; line-height: 14px; }
.plot i { background: #ff1a1a; border: 1px solid #000; border-width: 1px 0 0 1px; }
.plot div:last-child i { border-right-width: 1px; }
.xlab { display: flex; height: 29px; flex: none; margin: 1px 0 8px 5px; }
.xlab span { width: 55px; padding: 3px 0 0 8px; overflow: hidden; background: #ff1a1a; border: 1px solid #000; border-right: 0; line-height: 14px; color: #300; }
.xlab span:last-child { border-right: 1px solid #000; }
.res { flex: 1; display: flex; margin-top: 1px; border: 2px solid #000; border-width: 1px 2px 1px 1px; min-height: 0; }
.res .list { flex: none; width: 92px; margin-right: 3px; font-weight: bold; }
.reso { flex: 1; min-width: 0; display: flex; flex-direction: column; border-left: 1px solid #000; padding: 0 2px; }
.reso label { text-align: center; line-height: 20px; }
.reso output { padding: 4px 0 1px 4px; }
.reso input { appearance: none; width: 100%; height: 14px; background: var(--tr); border: 2px solid; border-color: var(--lo) var(--hi) var(--hi) var(--lo); }
.reso input::-webkit-slider-thumb { appearance: none; width: 30px; height: 10px; background: linear-gradient(90deg, transparent 14px, #5a8a8a 14px 15px, #cdf4f4 15px 16px, transparent 16px), #9cdbdb; border: 1px solid #cdf4f4; }
.sash { height: 10px; display: flex; justify-content: flex-end; padding-right: 10px; background: linear-gradient(transparent 5px, #2d7a66 5px 6px, #a5efdc 6px 7px, transparent 7px); }
.sash i { width: 10px; height: 10px; }
.map { flex: 1; display: grid; place-items: center; margin: 0 4px 1px 3px; box-shadow: inset 0 0 0 1px #000; }
.map svg { width: 194px; height: 122px; }
.hi-foot { display: flex; gap: 5px; height: 44px; padding: 2px 5px 2px; }
.hi-foot .tool { height: 38px; padding: 2px 1px; }
.hi-foot output { flex: 1; padding: 11px 3px; background: var(--bg); border: 1px solid #000; white-space: nowrap; margin-left: -2px; margin-right: -2px; }
.sq { width: 38px; height: 38px; padding: 2px; }
.sq svg { width: 30px; height: 30px; }
.histo .foot { padding: 3px 2px 1px; }

/* results viewer */
.viewer { left: 1px; top: 637px; width: 509px; height: 403px; background: linear-gradient(90deg, #777 0, #8a8a8a 20%, #000 38%, #222 52%, #777 85%, #888) 0 0/100% 28px no-repeat, linear-gradient(#999 0, #ddd 115px, #1b2430 122px, #333a44); }
.viewer .close { background: linear-gradient(#e08a78, #c03a28 50%, #902010 55%, #c86040); border-color: #e8c8c0; margin-right: -2px; }
.rv-head { height: 28px; padding: 1px; }
.rv-head h2 { height: 26px; text-align: center; line-height: 22px; }
.rv-main { flex: 1; display: flex; gap: 2px; background: #000; padding-top: 2px; border-bottom: 1px solid #000; min-height: 0; }
.rv-l, .rv-r { display: flex; flex-direction: column; background: var(--bg); }
.rv-l { flex: none; width: 170px; }
.rv-r { flex: 1; min-width: 0; gap: 1px; }
.tabs { display: flex; height: 29px; border: 1px solid #000; background: #54cfb0; }
.tabs button { margin: 1px; width: 46px; font-style: italic; font-weight: normal; }
.tabs button:last-child { width: 37px; }
.tabs b { flex: 1; background: #9cdbdb; border: 1px solid #000; border-width: 0 1px; text-align: center; font-style: italic; line-height: 26px; }
.lrow { display: flex; gap: 5px; }
.rv-l .lrow { flex: 1; min-height: 0; }
.rv-l .hs { width: 149px; margin: 5px 0 2px; }
.repl { border: 1px solid #000; padding: 1px 1px 1px 4px; height: 32px; display: flex; }
.repl .opt { flex: 1; }
.cats { display: flex; height: 30px; background: #9cdbdb; }
.cats button { width: 208px; font-style: italic; }
.cats label { line-height: 31px; }
.cats .opt { flex: 1; margin-left: 6px; }
.rv-r .lrow { height: 116px; }
.rv-r .hs { width: 302px; margin-top: 2px; }
.navr { display: flex; gap: 4px; height: 26px; padding-left: 1px; }
.navr button { width: 44px; height: 24px; margin-top: 1px; }
.navr button:first-child { width: 53px; }
.navr label { line-height: 25px; }
.navr input { flex: 1; min-width: 0; border: 2px solid #fff; padding: 0 0 4px 5px; box-shadow: inset 1px 1px 0 1px #2d7a66; font-weight: normal; }
.zoomr { display: flex; height: 32px; }
.az, .sv { border: 1px solid #000; display: flex; padding: 1px 1px 1px 4px; }
.az { width: 124px; }
.az .opt { flex: 1; }
.sv { width: 97px; padding: 0; border-left: 0; background: #9cdbdb; }
.sv > label { width: 27px; line-height: 30px; }
.sv > span { flex: 1; padding: 2px 2px 2px 5px; background: #18ee18; display: flex; --bg: #18ee18; --hi: #7ff57f; --lo: #3c9c3c; }
.sv .opt { flex: 1; }
.show { display: flex; align-items: center; gap: 3px; padding: 0 0 5px 3px; }
.show input { appearance: none; width: 13px; height: 13px; border: 1px solid; border-color: var(--hi) var(--lo) var(--lo) var(--hi); }
.toolr { display: flex; justify-content: flex-end; gap: 4px; padding: 1px 1px 0 0; }
.rv-stat { height: 21px; background: #54cfb0; text-align: center; line-height: 22px; border-bottom: 1px solid #000; }
.rv-erf { height: 21px; padding-left: 1px; background: #fffecd; border: 1px solid #000; line-height: 20px; }
.rv-foot { display: flex; gap: 4px; height: 34px; padding: 2px; background: var(--bg); }
.rv-foot .mono { flex: 1; }
.rv-foot .ic { width: 30px; height: 30px; padding: 2px; }
.ic svg { width: 22px; height: 22px; }
.rv-foot .hot { border-color: #e01818; }
.arrows { position: absolute; left: 0; top: 0; width: 100%; height: 100%; pointer-events: none; }
```
